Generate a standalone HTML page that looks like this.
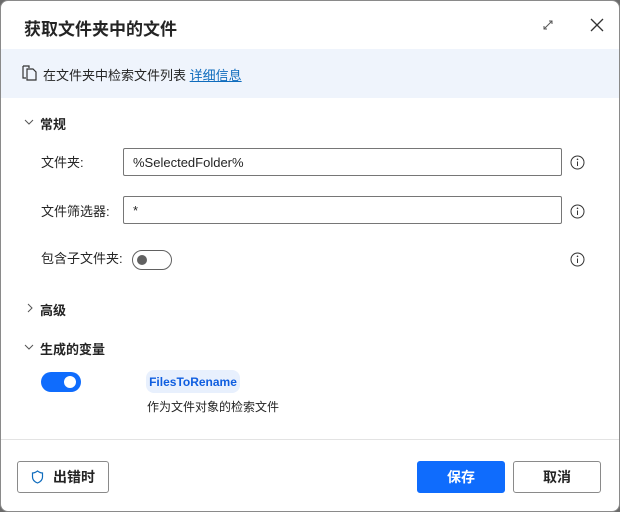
<!DOCTYPE html>
<html><head><meta charset="utf-8"><style>
*{box-sizing:border-box;margin:0;padding:0}
html,body{width:620px;height:512px;overflow:hidden;background:#6b6b6b}
body{font-family:"Liberation Sans","Noto Sans CJK SC",sans-serif;color:#242424;font-size:13px}
.dlg{position:absolute;left:0;top:0;width:620px;height:512px;background:#fff;border:1px solid #8a8a8a;border-radius:8px;overflow:hidden}
.a{position:absolute}
.title{left:23px;top:14px;font-size:17px;font-weight:bold;color:#242424}
.band{left:0;top:48px;width:620px;height:49px;background:#eff4fc}
.lbl{font-size:13px;color:#242424}
.input{border:1px solid #767676;border-radius:2px;height:28px;width:439px;left:122px;padding:6px 9px;font-size:13px}
.info{width:15px;height:15px}
.btn{border:1px solid #8a8a8a;border-radius:3px;height:32px;font-size:14px;font-weight:bold;display:flex;align-items:center;justify-content:center}
</style></head><body><div class="dlg">
<div class="a title">获取文件夹中的文件</div>
<svg class="a" style="left:541px;top:18px" width="12" height="12" viewBox="0 0 12 12"><path d="M2 10L10 2M7 2h3v3M2 7v3h3" stroke="#555" fill="none" stroke-width="1"/></svg>
<svg class="a" style="left:589px;top:17px" width="14" height="14" viewBox="0 0 14 14"><path d="M1 1L13 13M13 1L1 13" stroke="#333" stroke-width="1.3"/></svg>
<div class="a band"></div>
<svg class="a" style="left:21px;top:64px" width="15" height="16" viewBox="0 0 15 16"><path d="M1 1h6v2M1 1v12h3M5 4h6l3 3v8H5z" stroke="#333" fill="none" stroke-width="1.2"/></svg>
<div class="a lbl" style="left:42px;top:64px">在文件夹中检索文件列表 <span style="color:#0f6cbd;text-decoration:underline">详细信息</span></div>
<svg class="a" style="left:23px;top:117px" width="10" height="8" viewBox="0 0 10 8"><path d="M1 2l4 4 4-4" stroke="#555" fill="none"/></svg>
<div class="a" style="left:39px;top:113px;font-weight:bold;font-size:13px">常规</div>
<div class="a lbl" style="left:40px;top:151px">文件夹:</div>
<div class="a input" style="top:147px">%SelectedFolder%</div>
<div class="a lbl" style="left:40px;top:200px">文件筛选器:</div>
<div class="a input" style="top:195px">*</div>
<div class="a lbl" style="left:40px;top:247px">包含子文件夹:</div>
<div class="a" style="left:131px;top:249px;width:40px;height:20px;border:1px solid #616161;border-radius:10px"><div class="a" style="left:4px;top:4px;width:10px;height:10px;border-radius:50%;background:#616161"></div></div>
<svg class="a info" style="left:569px;top:154px" viewBox="0 0 15 15"><circle cx="7.5" cy="7.5" r="6.5" stroke="#333" fill="none"/><path d="M7.5 6.5v4.5" stroke="#333"/><circle cx="7.5" cy="4.3" r=".8" fill="#333"/></svg>
<svg class="a info" style="left:569px;top:203px" viewBox="0 0 15 15"><circle cx="7.5" cy="7.5" r="6.5" stroke="#333" fill="none"/><path d="M7.5 6.5v4.5" stroke="#333"/><circle cx="7.5" cy="4.3" r=".8" fill="#333"/></svg>
<svg class="a info" style="left:569px;top:251px" viewBox="0 0 15 15"><circle cx="7.5" cy="7.5" r="6.5" stroke="#333" fill="none"/><path d="M7.5 6.5v4.5" stroke="#333"/><circle cx="7.5" cy="4.3" r=".8" fill="#333"/></svg>
<svg class="a" style="left:25px;top:302px" width="8" height="10" viewBox="0 0 8 10"><path d="M2 1l4 4-4 4" stroke="#555" fill="none"/></svg>
<div class="a" style="left:39px;top:299px;font-weight:bold;font-size:13px">高级</div>
<svg class="a" style="left:23px;top:342px" width="10" height="8" viewBox="0 0 10 8"><path d="M1 2l4 4 4-4" stroke="#555" fill="none"/></svg>
<div class="a" style="left:39px;top:338px;font-weight:bold;font-size:13px">生成的变量</div>
<div class="a" style="left:40px;top:371px;width:40px;height:20px;border-radius:10px;background:#0f6cfd"><div class="a" style="left:23px;top:4px;width:12px;height:12px;border-radius:50%;background:#fff"></div></div>
<div class="a" style="left:145px;top:369px;width:94px;height:23px;border-radius:8px;background:#e8f0fd;color:#0f5ee0;font-size:12px;font-weight:bold;padding-top:5px;text-align:center">FilesToRename</div>
<div class="a lbl" style="left:146px;top:397px;font-size:12px">作为文件对象的检索文件</div>
<div class="a" style="left:0;top:438px;width:620px;height:1px;background:#e3e3e3"></div>
<div class="a btn" style="left:16px;top:460px;width:92px"><svg width="13" height="14" viewBox="0 0 13 14" style="margin-right:9px"><path d="M6.5 1C4.5 2.5 3 3 1.5 3v4c0 3 2.5 5 5 6 2.5-1 5-3 5-6V3C10 3 8.5 2.5 6.5 1z" stroke="#0f6cbd" fill="none" stroke-width="1.2"/></svg>出错时</div>
<div class="a btn" style="left:416px;top:460px;width:88px;background:#0f6cfd;border-color:#0f6cfd;color:#fff">保存</div>
<div class="a btn" style="left:512px;top:460px;width:88px">取消</div>
</div></body></html>
